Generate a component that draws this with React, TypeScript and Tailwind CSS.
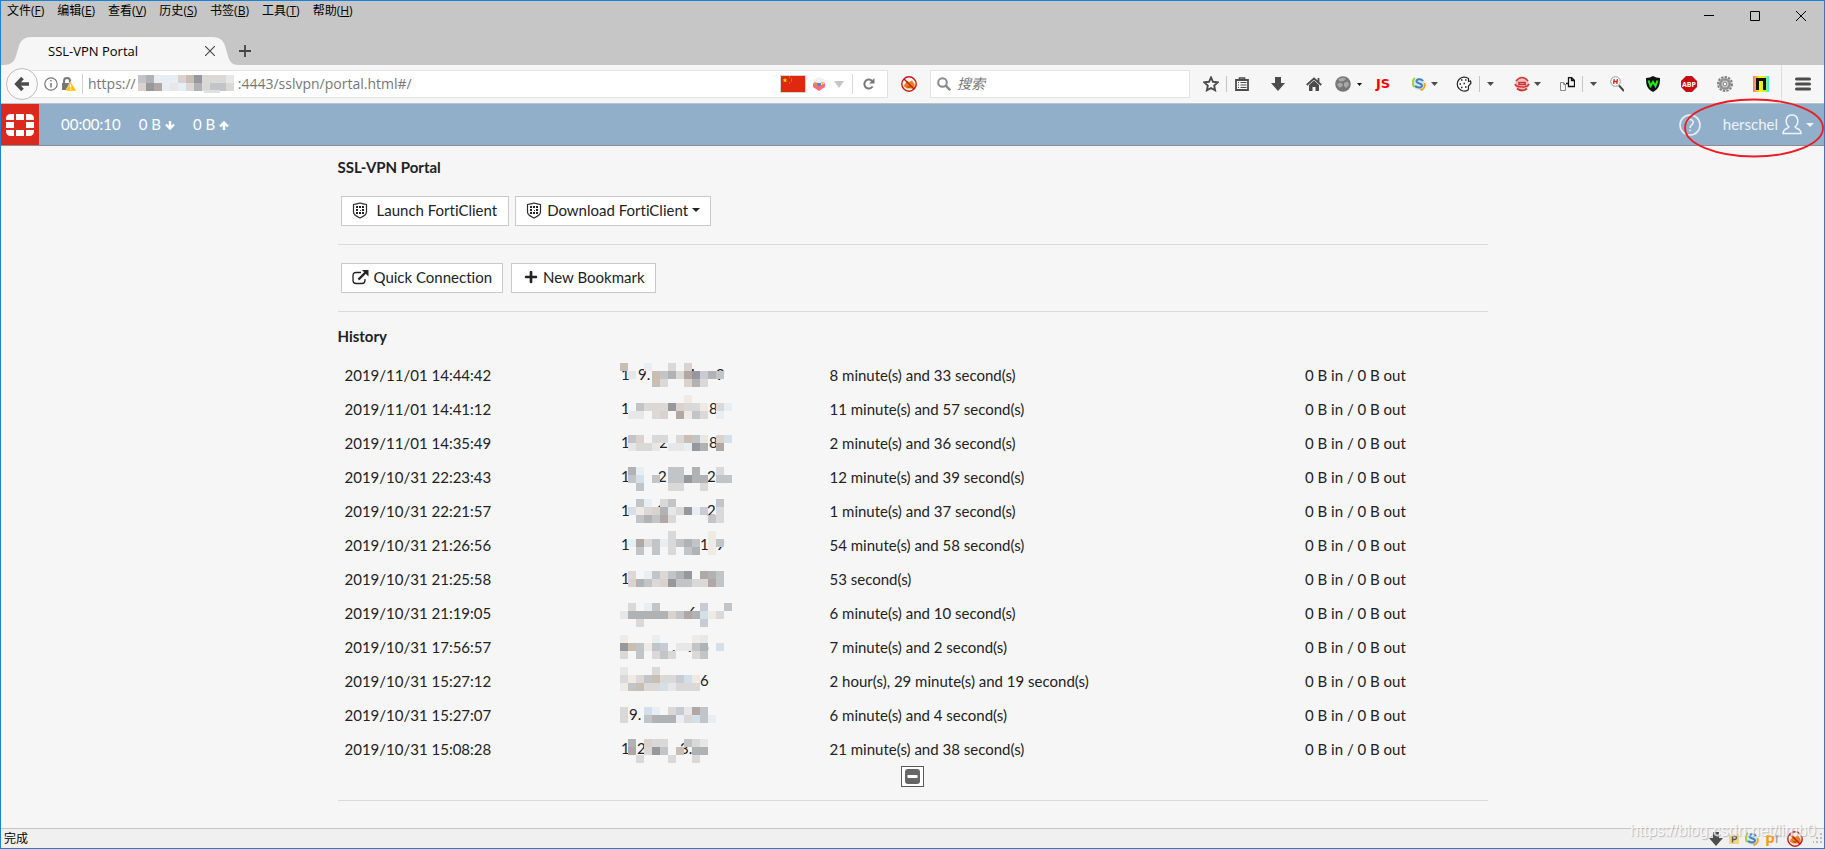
import type { ReactNode } from 'react'
import { FaPlus } from 'react-icons/fa'

const menus = [
  ['文件', 'F'],
  ['编辑', 'E'],
  ['查看', 'V'],
  ['历史', 'S'],
  ['书签', 'B'],
  ['工具', 'T'],
  ['帮助', 'H'],
]

const palette: Record<string, string> = {
  a: '#97989c',
  b: '#b0b2b3',
  c: '#c2c5c8',
  d: '#dad9d8',
  e: '#e7e7e8',
  f: '#c9beb2',
  g: '#efeae4',
  h: '#d3dfe9',
  i: '#e8eff4',
  l: '#c8cad6',
  m: '#b1a8a5',
  n: '#dcd2cd',
}

type Bit = [number, string]
type Entry = { time: string; length: string; top: number; bits: Bit[]; mask: string[] }

const entries: Entry[] = [
  { time: '2019/11/01 14:44:42', length: '8 minute(s) and 33 second(s)', top: 5, bits: [[1, '1'], [18, '9.'], [67, '4'], [96, '9']], mask: ['f..i..d.n', '.e..fcbdmalbc', '....fd..nbd'] },
  { time: '2019/11/01 14:41:12', length: '11 minute(s) and 57 second(s)', top: 3, bits: [[1, '1'], [18, '7'], [89, '8']], mask: ['........g', '..cdddanddg.di', '.ee.dn.mgcd.i'] },
  { time: '2019/11/01 14:35:49', length: '2 minute(s) and 36 second(s)', top: 9, bits: [[1, '1'], [39, '2'], [89, '8']], mask: ['.cn.dd.dfce.nh', '.edde.eeiab.m'] },
  { time: '2019/10/31 22:23:43', length: '12 minute(s) and 39 second(s)', top: 7, bits: [[1, '1'], [38, '2'], [87, '2']], mask: ['.bi...cc.b..d', '.ch.c.ccabb.cc', '..c...dd..d'] },
  { time: '2019/10/31 22:21:57', length: '1 minute(s) and 37 second(s)', top: 5, bits: [[1, '1'], [37, '2'], [87, '2']], mask: ['..ci.dc.....c', '.hgdnbedail.d', '..cbcmd....cd'] },
  { time: '2019/10/31 21:26:56', length: '54 minute(s) and 58 second(s)', top: 3, bits: [[1, '1'], [80, '1'], [96, '9']], mask: ['......d....g', '.imdcidcbc.gc', '..c.c.d.cb.g'] },
  { time: '2019/10/31 21:25:58', length: '53 second(s)', top: 9, bits: [[1, '1'], [74, '.']], mask: ['.d.icdcba.mbc', '.nbcdnaccddmc'] },
  { time: '2019/10/31 21:19:05', length: '6 minute(s) and 10 second(s)', top: 7, bits: [[68, '6']], mask: ['.d.ic.....l..c', 'ebbbbbncmbhgd', '..d.......l'] },
  { time: '2019/10/31 17:56:57', length: '7 minute(s) and 2 second(s)', top: 5, bits: [[52, '.'], [68, '.'], [80, '6']], mask: ['g...i....ge', 'afcgcl.eecb.h', 'd.c.dcd..dc'] },
  { time: '2019/10/31 15:27:12', length: '2 hour(s), 29 minute(s) and 19 second(s)', top: 3, bits: [[80, '6']], mask: ['e...d', 'dgdcfddlhg', 'gcfddheddd'] },
  { time: '2019/10/31 15:27:07', length: '6 minute(s) and 4 second(s)', top: 9, bits: [[9, '9.'], [79, '6']], mask: ['d..hi.dlemc', 'd..cbbbidhci'] },
  { time: '2019/10/31 15:08:28', length: '21 minute(s) and 38 second(s)', top: 7, bits: [[1, '1'], [17, '2'], [60, '3.']], mask: ['.b.ndd..cde', '.m.dac.f.bb', '..d...d..d'] },
]

function Mosaic({ mask, top = 0 }: { mask: string[]; top?: number }) {
  return (
    <>
      {mask.map((line, y) =>
        line
          .split('')
          .map((c, x) =>
            palette[c] ? <rect key={`${x}-${y}`} x={x * 8} y={top + y * 8} width="8" height="8" fill={palette[c]} /> : null,
          ),
      )}
    </>
  )
}

function ToolButton({ label, children }: { label: string; children: ReactNode }) {
  return (
    <button type="button" aria-label={label} className="flex h-5 min-w-4 shrink-0 items-center justify-center">
      {children}
    </button>
  )
}

function Caret() {
  return (
    <svg width="7" height="4" viewBox="0 0 7 4">
      <path d="M0 0h7L3.5 4z" fill="#4c4c4c" />
    </svg>
  )
}

function Separator() {
  return <span className="h-4 w-px shrink-0 bg-[#c4c4c4]" />
}

function NoFoxIcon() {
  return (
    <svg width="16" height="16" viewBox="0 0 16 16">
      <path d="M3 10.500c0-2 1-3 2-3.500l1-2.500L8 6l3-1.500 1 1.500c1.500 1 2 3 1.500 5L11 12.500H6z" fill="#e58413" />
      <path d="M5 9l2 1.500L10 9l-1 3H7z" fill="#b55a0c" />
      <circle cx="8" cy="8" r="7.200" fill="none" stroke="#c5181d" strokeWidth="1.400" />
      <path d="M3 3l10 10" stroke="#c5181d" strokeWidth="1.400" />
    </svg>
  )
}

function SwirlIcon() {
  return (
    <svg width="14" height="14" viewBox="0 0 14 14">
      <circle cx="7" cy="7" r="6" fill="#cfe6f5" />
      <path d="M3 1C0 3 0 8 2.500 10" fill="none" stroke="#a5d32a" strokeWidth="2" />
      <path d="M11 4c-2-3-7-2-6.500.5C5 7 10 6 10 8.500c0 2.500-5 2.500-7 .5" fill="none" stroke="#4a80b8" strokeWidth="2" />
      <path d="M12.500 6c1 3-.5 6-3 7l-1-1.500" fill="none" stroke="#f2a51d" strokeWidth="1.800" />
    </svg>
  )
}

function DownIcon() {
  return (
    <svg width="14" height="14" viewBox="0 0 14 14">
      <path d="M4 0h6v6h4l-7 8-7-8h4z" fill="#4c4c4c" />
    </svg>
  )
}

function TrafficArrow({ up = false }: { up?: boolean }) {
  return (
    <svg width="10" height="9" viewBox="0 0 10 9" className={up ? 'mt-1 rotate-180' : 'mt-1'}>
      <path d="M5 0v7M1 3.500l4 4 4-4" fill="none" stroke="#fff" strokeWidth="2.400" />
    </svg>
  )
}

function ShieldIcon() {
  return (
    <svg width="16" height="17" viewBox="0 0 16 17">
      <path
        d="M1.500 2.500Q5 2 8 1q3 1 6.500 1.500V10c0 3-3 4.500-6.500 6-3.500-1.500-6.500-3-6.500-6z"
        fill="none"
        stroke="#2b2b2b"
        strokeWidth="1.200"
      />
      <path
        d="M4 4h2v2H4zM7 4h2v2H7zM10 4h2v2h-2zM4 7h2v2H4zM10 7h2v2h-2zM4 10h2v2H4zM7 10h2v2H7zM10 10h2v2h-2zM7.500 7.500h1v1h-1z"
        fill="#222"
        shapeRendering="crispEdges"
      />
    </svg>
  )
}

function TitleArea() {
  return (
    <div className="bg-[#c6c6c6]">
      <div className="flex justify-between">
        <nav className="flex gap-[13px] pt-0.5 pl-1.5">
          {menus.map(([name, key]) => (
            <button type="button" key={key} className="h-4 text-[12px] leading-4 text-black">
              {name}(<span className="underline">{key}</span>)
            </button>
          ))}
        </nav>
        <div className="flex h-9 items-start gap-9 pt-2.5 pr-[18px]">
          <button type="button" aria-label="Minimize">
            <svg width="10" height="10" viewBox="0 0 10 10"><path d="M0 4.500h10" stroke="#000" /></svg>
          </button>
          <button type="button" aria-label="Maximize">
            <svg width="10" height="10" viewBox="0 0 10 10"><path d="M.5.5h9v9h-9z" fill="none" stroke="#000" /></svg>
          </button>
          <button type="button" aria-label="Close window">
            <svg width="10" height="10" viewBox="0 0 10 10"><path d="M0 0l10 10M10 0L0 10" stroke="#000" /></svg>
          </button>
        </div>
      </div>
      <div className="flex h-7 items-center">
        <div className="relative flex h-7 w-[238px] items-center justify-between pr-6 pl-[47px]">
          <svg className="absolute inset-0" width="238" height="28" viewBox="0 0 238 28">
            <path d="M1 28C14 28 14 22 17 12 19 4 22 0 31 0H211C220 0 223 4 225 12 228 22 228 28 238 28Z" fill="#f6f6f6" />
          </svg>
          <span className="relative text-[13px] leading-4 text-black">SSL-VPN Portal</span>
          <button type="button" aria-label="Close tab" className="relative">
            <svg width="10" height="10" viewBox="0 0 10 10"><path d="M0 0l10 10M10 0L0 10" stroke="#4a4a4a" strokeWidth="1.200" /></svg>
          </button>
        </div>
        <button type="button" aria-label="New tab">
          <svg width="12" height="12" viewBox="0 0 12 12"><path d="M6 0v12M0 6h12" stroke="#444" strokeWidth="1.800" /></svg>
        </button>
      </div>
    </div>
  )
}

function AddressBar() {
  return (
    <div className="flex flex-1 items-center">
      <button
        type="button"
        aria-label="Back"
        className="z-10 -mr-4 flex size-8 shrink-0 items-center justify-center rounded-full border border-[#bebebe] bg-[#fafafa]"
      >
        <svg width="16" height="16" viewBox="0 0 16 16">
          <path d="M8.500 2L2.800 8l5.700 6M3 8h12" fill="none" stroke="#4c4c4c" strokeWidth="3.600" />
        </svg>
      </button>
      <div className="flex h-7 flex-1 items-center border border-[#e2e2e2] bg-white pl-5">
        <svg width="34" height="16" viewBox="0 0 34 16">
          <circle cx="8" cy="8" r="6.200" fill="none" stroke="#777" strokeWidth="1.200" />
          <path d="M8 7v4.500M8 4v1.600" stroke="#777" strokeWidth="1.500" />
          <path d="M21 8V5c0-4 6-4 6 0v3" fill="none" stroke="#777" strokeWidth="2" />
          <path d="M19 7h9v7h-9z" fill="#777" />
          <path d="M27.500 5.500l6 9.500h-11z" fill="#ffbf00" stroke="#fff" strokeWidth=".5" />
          <path d="M27.500 8.500v3M27.500 12.500v1.200" stroke="#fff" strokeWidth="1.400" />
        </svg>
        <span className="mx-[5px] h-5 w-px bg-[#d0d0d0]" />
        <label htmlFor="address" className="pr-0.5 text-[14px] leading-5 text-[#777]">https://</label>
        <svg width="100" height="18" viewBox="0 0 100 18">
          <Mosaic mask={['cbiiinfaddde', 'namieidbdccd']} />
          <path d="M66 15h16v3H66z" fill="#e0e0e0" />
        </svg>
        <input
          id="address"
          readOnly
          defaultValue=":4443/sslvpn/portal.html#/"
          className="min-w-0 flex-1 bg-transparent text-[14px] leading-5 text-[#777] outline-none"
        />
        <svg width="26" height="18" viewBox="0 0 26 18">
          <path d="M.5.5h25v17H.5z" fill="#de2910" stroke="#d5d5d5" />
          <path d="M5 3l.7 1.400 1.500.2-1.100 1 .3 1.500L5 6.400l-1.400.7.3-1.500-1.100-1 1.500-.2z" fill="#ffde00" />
          <path d="M9 2h1M11 4h1M11 6h1M9 8h1" stroke="#e89a00" />
        </svg>
        <svg className="ml-1.5" width="14" height="14" viewBox="0 0 14 14">
          <path d="M7 0l6 3v7l-6 4-6-4V3z" fill="#f0f0f4" />
          <path d="M1 6l4 2h4l4-2v4l-6 4-6-4z" fill="#fb6d7c" />
          <path d="M2 5l4 1v3H3z" fill="#ef8350" />
          <path d="M5 6h4v2L7 9 5 8z" fill="#3f8fd2" />
          <path d="M9 5l3 0-2 3z" fill="#f2bd3f" />
        </svg>
        <svg className="ml-2" width="10" height="7" viewBox="0 0 10 7">
          <path d="M0 0h10L5 7z" fill="#c6c6c6" />
        </svg>
        <span className="mr-2.5 ml-2 h-5 w-px bg-[#d8d8d8]" />
        <button type="button" aria-label="Reload" className="pr-3">
          <svg width="12" height="12" viewBox="0 0 12 12">
            <path d="M9.600 8.500A4.500 4.500 0 1 1 9 2.800" fill="none" stroke="#777" strokeWidth="2" />
            <path d="M11.500 0v5.500H6z" fill="#777" />
          </svg>
        </button>
      </div>
    </div>
  )
}

function Extensions() {
  return (
    <div className="flex shrink-0 items-center gap-5 pl-[13px]">
      <div className="flex items-center gap-[7px]">
        <ToolButton label="Bookmark this page">
          <svg width="16" height="16" viewBox="0 0 16 16">
            <path d="M8 1.500l2 4.300 4.700.6-3.500 3.200.9 4.700L8 12l-4.100 2.300.9-4.700L1.300 6.400 6 5.800z" fill="none" stroke="#4c4c4c" strokeWidth="1.900" />
          </svg>
        </ToolButton>
        <Separator />
        <ToolButton label="Bookmarks">
          <svg width="14" height="14" viewBox="0 0 14 14">
            <path d="M1 3h12v10H1z" fill="#f6f6f6" stroke="#4c4c4c" strokeWidth="1.800" />
            <path d="M4.500 3V1h5v2" fill="none" stroke="#4c4c4c" strokeWidth="1.600" />
            <path d="M3 5.500h1M5.500 5.500h6M3 8h1M5.500 8h6M3 10.500h1M5.500 10.500h6" stroke="#4c4c4c" />
          </svg>
        </ToolButton>
      </div>
      <ToolButton label="Downloads"><DownIcon /></ToolButton>
      <div className="flex items-center gap-[13px]">
        <ToolButton label="Home">
          <svg width="16" height="14" viewBox="0 0 16 14">
            <path d="M.7 8L8 1.500 15.300 8M12.500 1v4" fill="none" stroke="#4c4c4c" strokeWidth="1.800" />
            <path d="M3 8l5-4.500L13 8v6H9.500v-4h-3v4H3z" fill="#4c4c4c" />
          </svg>
        </ToolButton>
        <div className="flex items-center gap-1.5">
          <ToolButton label="Proxy">
            <svg width="16" height="16" viewBox="0 0 16 16">
              <circle cx="8" cy="8" r="7.800" fill="#777" />
              <path d="M3 3.500q4-3 8-1L9 5 5 5.500zM2 8l3-1.500L8 8l-1 3-3 .5zM9 7l4-1.500L14 9l-3 3-2-2z" fill="#a8a8a8" />
            </svg>
          </ToolButton>
          <svg width="5" height="3" viewBox="0 0 5 3"><path d="M0 0h5L2.500 3z" fill="#111" /></svg>
        </div>
        <ToolButton label="Toggle scripts">
          <span className="font-['DejaVu_Sans',sans-serif] text-[13px] leading-4 font-bold text-[#f00]">JS</span>
        </ToolButton>
      </div>
      <div className="flex items-center gap-1">
        <ToolButton label="Sync"><SwirlIcon /></ToolButton>
        <Caret />
      </div>
      <div className="-ml-0.5 flex items-center gap-[7px]">
        <ToolButton label="Cookies">
          <svg width="16" height="16" viewBox="0 0 16 16">
            <path d="M12.500 2.500A7 7 0 1 0 12 14c1-1 0-3 .500-4l2.500-3-.5-2-2 .5z" fill="#fff" stroke="#222" strokeWidth="1.200" />
            <path d="M5 4h1.500M9 4h1.500M3.500 8H5M7.500 7.500H9M5 11.500h1.500M9 11h1.500" stroke="#222" strokeWidth="1.500" />
          </svg>
        </ToolButton>
        <Separator />
        <Caret />
      </div>
      <div className="flex items-center gap-1">
        <ToolButton label="Translate">
          <svg width="16" height="16" viewBox="0 0 16 16">
            <circle cx="8" cy="8" r="7" fill="#f0c0c0" />
            <path d="M2 5q6-7 12 0M5 6.500h6v2H5zM1 8q1 3 7 3t7-3M3 12.500q5 4 10 0" fill="none" stroke="#cc3838" strokeWidth="1.700" />
          </svg>
        </ToolButton>
        <Caret />
      </div>
      <div className="-ml-0.5 flex items-center gap-[7px]">
        <ToolButton label="Merge pages">
          <svg width="15" height="14" viewBox="0 0 15 14" fill="none">
            <path d="M.5 5.500h3l2 2v6h-5zM3.500 5.500v2h2" stroke="#888" />
            <path d="M8.500.5h3l3 3v6h-6zM11.500.5v3h3M6 6.500h2" stroke="#111" strokeWidth="1.300" />
          </svg>
        </ToolButton>
        <Separator />
        <Caret />
      </div>
      <div className="-ml-2 flex items-center gap-5">
        <ToolButton label="Inspect headers">
          <svg width="14" height="16" viewBox="0 0 14 16">
            <circle cx="5.500" cy="5.500" r="4.800" fill="#fff" stroke="#999" />
            <path d="M9 9.500l5 5.500" stroke="#444" strokeWidth="2" />
            <path d="M4.200 3.200l-.6 4.600M7.400 3.200l-.6 4.600M4 5.500h3" stroke="#e02020" strokeWidth="1.400" />
          </svg>
        </ToolButton>
        <ToolButton label="Web of trust">
          <svg width="14" height="16" viewBox="0 0 14 16">
            <path d="M0 2Q4 2 7 0q3 2 7 2c0 7-1 11-7 14C1 13 0 9 0 2z" fill="#111" />
            <path d="M2.500 4.500l2 5.500L7 6l2.500 4 2-5.500" fill="none" stroke="#1df01d" strokeWidth="2" />
          </svg>
        </ToolButton>
        <ToolButton label="Adblock">
          <svg width="16" height="16" viewBox="0 0 16 16">
            <path d="M5 0h6l5 5v6l-5 5H5l-5-5V5z" fill="#c70d12" />
            <text x="8" y="11" textAnchor="middle" fontSize="7" fontWeight="700" fill="#fff">ABP</text>
          </svg>
        </ToolButton>
        <ToolButton label="Settings">
          <svg width="16" height="16" viewBox="0 0 16 16" fill="none">
            <circle cx="8" cy="8" r="7" stroke="#808080" strokeWidth="2" strokeDasharray="2.400 1.200" />
            <circle cx="8" cy="8" r="4.800" fill="#c9c9c9" stroke="#909090" strokeWidth="2.600" />
            <circle cx="8" cy="8" r="1.800" fill="#fff" stroke="#888" />
          </svg>
        </ToolButton>
        <ToolButton label="Colour picker">
          <svg width="16" height="16" viewBox="0 0 16 16">
            <defs>
              <linearGradient id="rainbow">
                <stop offset="0" stopColor="#ff7088" />
                <stop offset=".4" stopColor="#fff200" />
                <stop offset=".7" stopColor="#d4f02c" />
                <stop offset="1" stopColor="#35ecec" />
              </linearGradient>
            </defs>
            <path d="M0 0h16v16H0z" fill="url(#rainbow)" />
            <path d="M4.500 14V3.500h7V14" fill="none" stroke="#111" strokeWidth="3" />
          </svg>
        </ToolButton>
      </div>
      <div className="-ml-2 flex items-center gap-[13px] pr-[13px]">
        <span className="h-[38px] w-px bg-[#dedede]" />
        <ToolButton label="Open menu">
          <svg width="16" height="14" viewBox="0 0 16 14">
            <path d="M1.500 2h13M1.500 7h13M1.500 12h13" stroke="#4c4c4c" strokeWidth="3" strokeLinecap="round" />
          </svg>
        </ToolButton>
      </div>
    </div>
  )
}

function Toolbar() {
  return (
    <div className="flex h-[38px] items-center bg-[#f6f6f6] pl-[5px]">
      <AddressBar />
      <div className="px-[13px]">
        <ToolButton label="Block"><NoFoxIcon /></ToolButton>
      </div>
      <div className="flex h-7 w-[260px] items-center gap-1.5 border border-[#e2e2e2] bg-white pl-1.5">
        <svg width="14" height="14" viewBox="0 0 14 14">
          <circle cx="5.500" cy="5.500" r="4.300" fill="none" stroke="#8a8a8a" strokeWidth="2" />
          <path d="M8.700 8.700L13.200 13.200" stroke="#8a8a8a" strokeWidth="2.400" />
        </svg>
        <input
          type="text"
          aria-label="搜索"
          placeholder="搜索"
          className="min-w-0 flex-1 text-[14px] leading-5 italic outline-none placeholder:text-[#777]"
        />
      </div>
      <Extensions />
    </div>
  )
}

function PortalHeader() {
  return (
    <header className="relative flex h-[43px] items-center justify-between border-t border-b border-t-[#b9c3cb] border-b-[#8d8d92] bg-[#91afc9] font-['Lato',sans-serif] text-[15px] leading-5 text-white">
      <div className="flex h-full items-center">
        <a href="#" aria-label="Portal home" className="flex h-full w-[38px] items-center justify-center bg-[#dc291e]">
          <svg width="28" height="22" viewBox="0 0 28 22" fill="#fff">
            <path d="M5 0h3v6H0V5Q0 0 5 0zM10 0h8v6h-8zM20 0h3q5 0 5 5v1h-8zM0 8h8v6H0zM20 8h8v6h-8zM0 16h8v6H5Q0 22 0 17zM10 16h8v6h-8zM20 16h8v1q0 5-5 5h-3z" />
          </svg>
        </a>
        <div className="flex items-center gap-[18px] pb-0.5 pl-[22px]">
          <span>00:00:10</span>
          <span className="flex items-center gap-1">0 B <TrafficArrow /></span>
          <span className="flex items-center gap-1">0 B <TrafficArrow up /></span>
        </div>
      </div>
      <div className="flex items-center gap-[22px] pr-2.5">
        <button type="button" aria-label="Help">
          <svg width="22" height="22" viewBox="0 0 22 22" fill="none" stroke="#e8eff5" strokeWidth="1.600">
            <circle cx="11" cy="11" r="10" />
            <path d="M7.800 9C7.800 4 14.400 4.600 14.200 8.500 14 11 11 11 11 14M11 15.500v1.800" />
          </svg>
        </button>
        <button type="button" className="flex items-center gap-1 text-[#eef4f8]">
          <span className="pb-0.5">herschel</span>
          <svg width="20" height="21" viewBox="0 0 20 21" fill="none" stroke="#eef4f8" strokeWidth="1.500">
            <path d="M7 13C2.500 9 3.500 1 10 1s7.500 8 3 12c1 2 6 1.500 6 6.500H1C1 14.500 6 15 7 13z" />
          </svg>
          <svg width="8" height="4" viewBox="0 0 8 4"><path d="M0 0h8L4 4z" fill="#eef4f8" /></svg>
        </button>
      </div>
      <svg className="pointer-events-none absolute -top-1.5 right-0" width="140" height="60" viewBox="0 0 140 60">
        <ellipse cx="70" cy="30" rx="69" ry="28.500" fill="none" stroke="#ec1c24" strokeWidth="1.800" />
      </svg>
    </header>
  )
}

function PortalButton({ icon, children }: { icon: ReactNode; children: ReactNode }) {
  return (
    <button type="button" className="flex h-[30px] items-center gap-[5px] border border-[#c9c9c9] bg-white px-2.5 pb-0.5">
      {icon}
      {children}
    </button>
  )
}

function Portal() {
  return (
    <main className="flex-1 bg-[#f6f6f6] font-['Lato',sans-serif] text-[15px] leading-5 text-[#222] [font-variant-ligatures:none]">
      <div className="mx-auto w-full max-w-[1150px] pt-[11px]">
        <h1 className="font-bold">SSL-VPN Portal</h1>
        <div className="mt-[19px] flex gap-1.5 border-b border-[#dadada] pb-[18px] pl-[3px]">
          <PortalButton icon={<ShieldIcon />}>
            <span className="pr-px pl-1">Launch FortiClient</span>
          </PortalButton>
          <PortalButton icon={<ShieldIcon />}>
            <span className="flex items-center gap-1">
              Download FortiClient
              <svg width="8" height="4" viewBox="0 0 8 4"><path d="M0 0h8L4 4z" fill="#222" /></svg>
            </span>
          </PortalButton>
        </div>
        <div className="mt-[18px] flex gap-2 border-b border-[#dadada] pb-[18px] pl-[3px]">
          <PortalButton
            icon={
              <svg width="17" height="15" viewBox="0 0 17 15" fill="none" stroke="#222">
                <path d="M9 2.500H4Q1 2.500 1 5.500v5q0 3 3 3h6q3 0 3-3V9" strokeWidth="1.300" />
                <path d="M6.500 9.500l7-7" strokeWidth="2.400" />
                <path d="M10 0h6.500v6.500z" fill="#222" stroke="none" />
              </svg>
            }
          >
            Quick Connection
          </PortalButton>
          <PortalButton icon={<FaPlus className="ml-0.5 size-3.5" />}>New Bookmark</PortalButton>
        </div>
        <h2 className="mt-3.5 mb-3 font-bold">History</h2>
        <table className="w-full table-fixed border-collapse">
          <tbody>
            {entries.map((entry) => (
              <tr key={entry.time} className="h-[34px]">
                <td className="w-[24%] py-0 pl-[7px]">{entry.time}</td>
                <td className="w-[18%] py-0 pl-1.5">
                  <svg className="block" width="114" height="34" viewBox="0 0 114 34">
                    {entry.bits.map(([x, text]) => (
                      <text key={x} x={x} y="22" fontSize="15" fill="#222">{text}</text>
                    ))}
                    <Mosaic mask={entry.mask} top={entry.top} />
                  </svg>
                </td>
                <td className="w-[41%] py-0 pl-[9px]">{entry.length}</td>
                <td className="w-[17%] py-0 pl-[13px]">0 B in / 0 B out</td>
              </tr>
            ))}
          </tbody>
        </table>
        <div className="flex justify-center border-b border-[#dadada] pb-[13px]">
          <button type="button" aria-label="Show less" className="flex h-[21px] w-[23px] items-center justify-center border border-[#5a5a5a] bg-white">
            <svg width="15" height="15" viewBox="0 0 15 15">
              <rect width="15" height="15" rx="3" fill="#666" />
              <path d="M2.500 7.500h10" stroke="#fff" strokeWidth="3" />
            </svg>
          </button>
        </div>
      </div>
    </main>
  )
}

function StatusBar() {
  return (
    <footer className="relative flex h-5 items-center justify-between border-t border-[#c6c6c6] bg-[#f0f0f0] pl-[3px]">
      <span className="text-[12px] leading-4 text-black">完成</span>
      <div className="flex items-center gap-1.5 pr-0.5">
        <DownIcon />
        <svg width="10" height="10" viewBox="0 0 10 10">
          <path d="M0 0h10v10H0z" fill="#ecd779" />
          <path d="M3.500 8.500V2h2q2 0 2 1.700t-2 1.800h-2" fill="none" stroke="#555" strokeWidth="1.300" />
        </svg>
        <SwirlIcon />
        <span className="pb-1 text-[15px] leading-4 font-bold text-[#ff9a0c]">p<span className="font-normal text-[#999]">r</span></span>
        <NoFoxIcon />
        <svg className="ml-1" width="9" height="12" viewBox="0 0 9 12" fill="#bcbcbc">
          <path d="M7 0h2v2H7zM7 4h2v2H7zM3 4h2v2H3zM7 8h2v2H7zM3 8h2v2H3zM0 8h1v2H0z" />
        </svg>
      </div>
      <span className="pointer-events-none absolute right-2 -top-2 font-['Liberation_Sans',sans-serif] text-[16px] leading-5 text-[#fafafa] opacity-80 [text-shadow:1px_1px_1px_#aaa]">
        https://blog.csdn.net/limb0
      </span>
    </footer>
  )
}

export default function App() {
  return (
    <div className="flex min-h-screen flex-col border border-[#1b82d6] font-['Open_Sans','Noto_Sans_CJK_SC',sans-serif]">
      <TitleArea />
      <Toolbar />
      <PortalHeader />
      <Portal />
      <StatusBar />
    </div>
  )
}
